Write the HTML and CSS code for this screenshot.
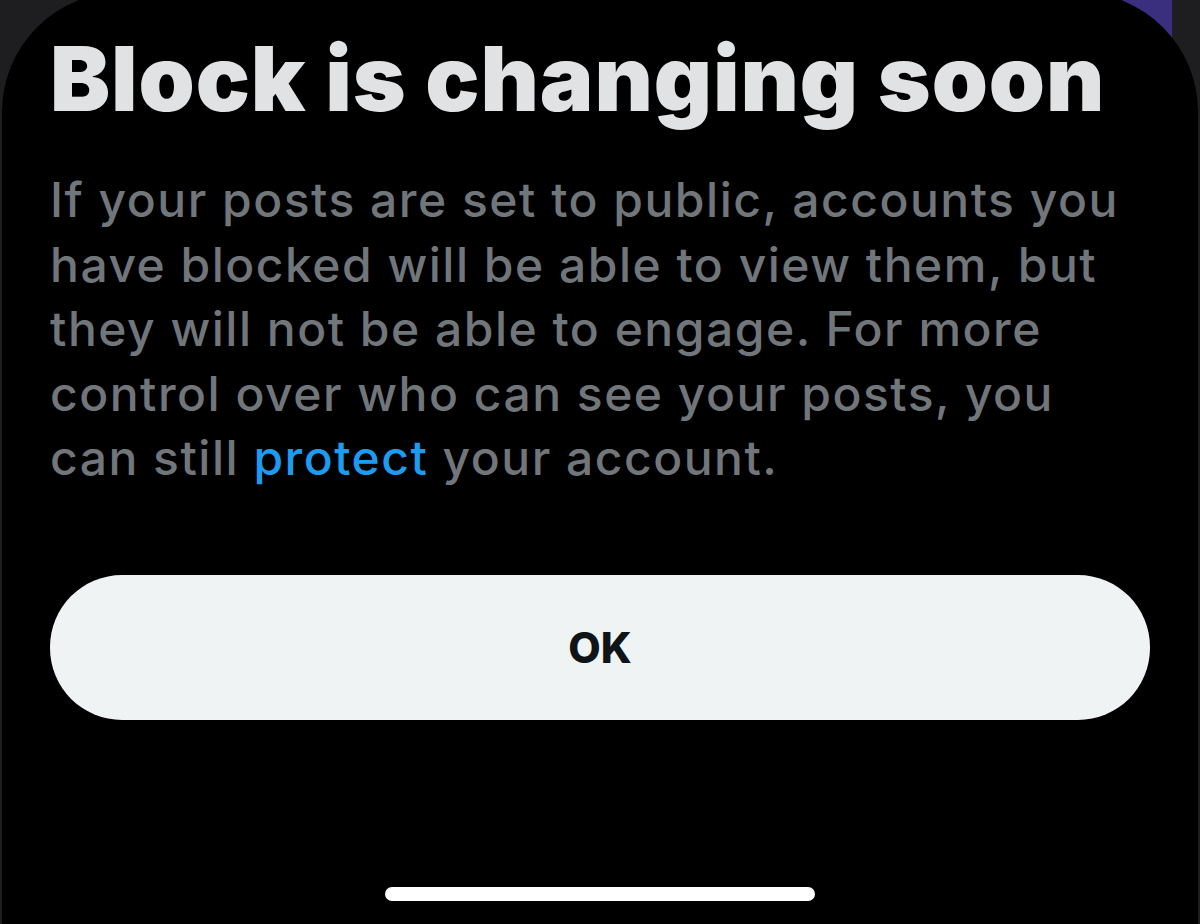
FILE: index.html
```html
<!DOCTYPE html>
<html lang="en">
<head>
<meta charset="utf-8">
<title>Block is changing soon</title>
<link rel="stylesheet" href="styles.css">
</head>
<body>
<div class="backdrop-accent"></div>
<main class="sheet">
  <h1 class="title">Block is changing soon</h1>
  <p class="body">If your posts are set to public, accounts you<br>have blocked will be able to view them, but<br>they will not be able to engage. For more<br>control over who can see your posts, you<br>can still <a class="link" href="#">protect</a> your account.</p>
  <button class="ok-btn" type="button">OK</button>
  <div class="home-indicator"></div>
</main>
</body>
</html>
```
FILE: styles.css
```css
html, body {
  margin: 0;
  padding: 0;
  height: 100%;
  overflow: hidden;
}
body {
  background: #1e1e21;
  font-family: Inter, "Noto Sans", sans-serif;
  position: relative;
}
.backdrop-accent {
  position: absolute;
  top: 0;
  left: 1000px;
  width: 172px;
  height: 60px;
  background: #3a2e7e;
}
.sheet {
  position: relative;
  margin: -8px 2px 0 2px;
  height: calc(100% + 8px);
  background: #000;
  border-radius: 120px 120px 0 0;
  padding: 42px 48px 0 48px;
  box-sizing: border-box;
  display: flex;
  flex-direction: column;
}
.title {
  margin: 0;
  font-size: 90px;
  line-height: 90px;
  font-weight: 900;
  color: #e1e2e3;
  letter-spacing: 0.9px;
  white-space: nowrap;
}
.body {
  margin: 44px 0 0 0;
  font-size: 48px;
  line-height: 64.5px;
  font-weight: 500;
  color: #71767b;
  letter-spacing: 1.5px;
  white-space: nowrap;
}
.link {
  color: #1d9bf0;
  text-decoration: none;
}
.ok-btn {
  margin-top: 84px;
  height: 145px;
  width: 100%;
  border: none;
  border-radius: 72px;
  background: #eff3f4;
  color: #0f1419;
  font-family: Inter, "Noto Sans", sans-serif;
  font-size: 42px;
  font-weight: 800;
  padding: 0;
}
.home-indicator {
  align-self: center;
  margin-top: 167px;
  width: 430px;
  height: 14px;
  border-radius: 7px;
  background: #fff;
}
```
